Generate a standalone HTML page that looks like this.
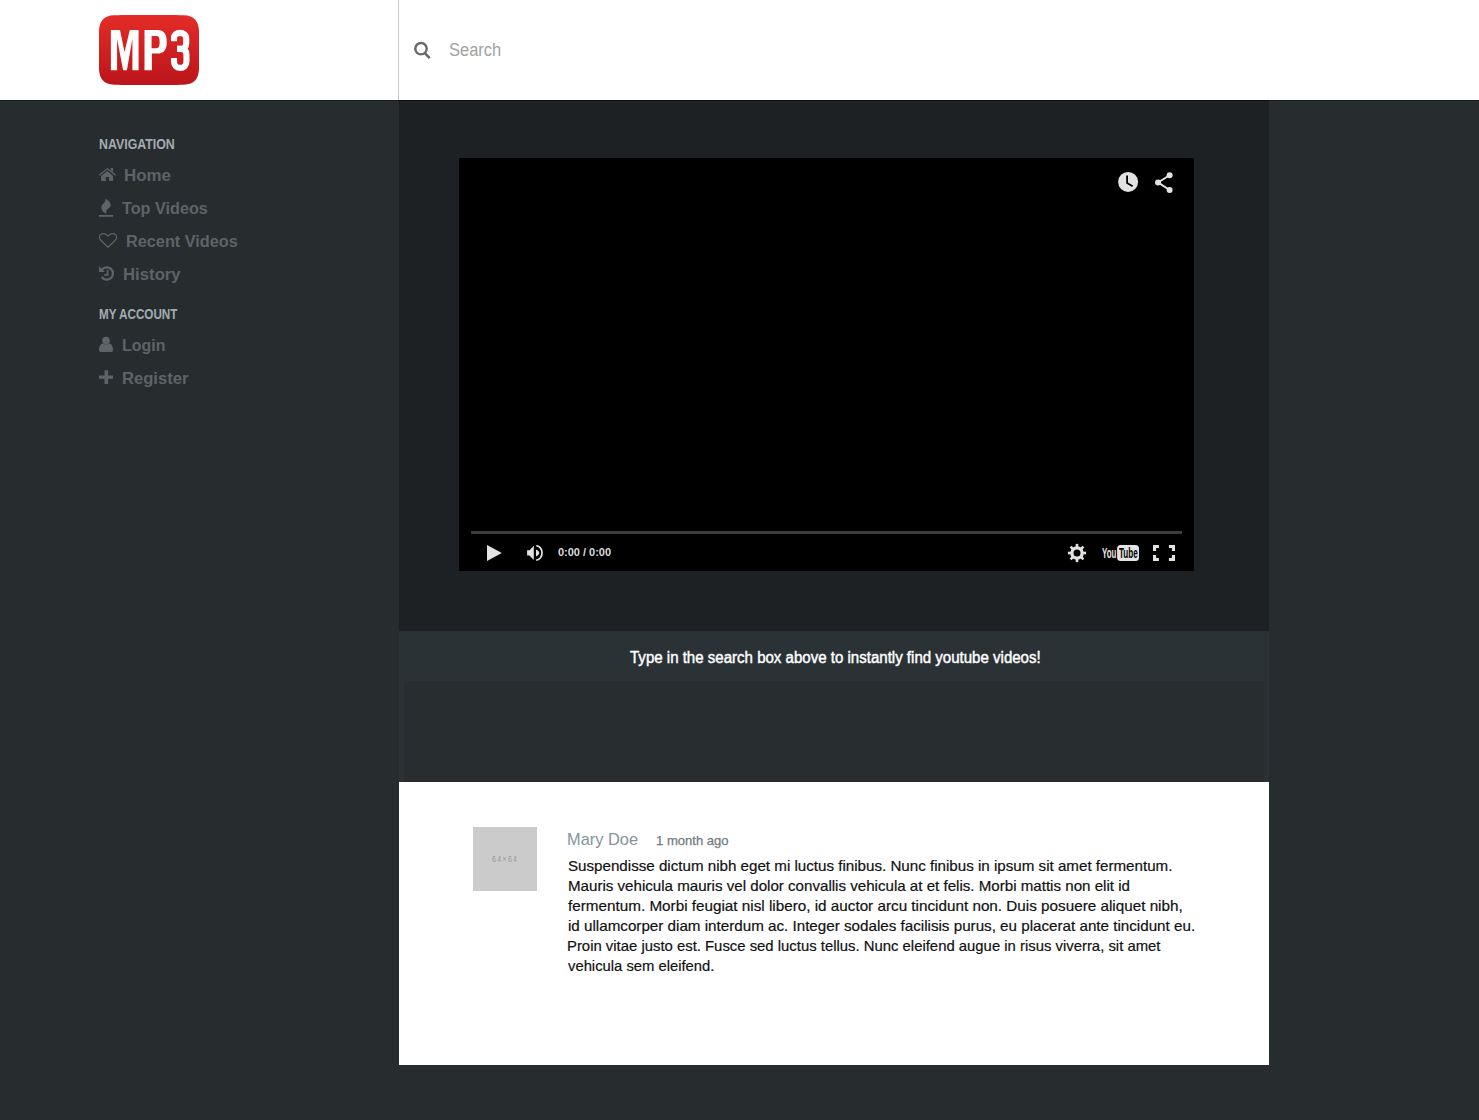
<!DOCTYPE html>
<html><head><meta charset="utf-8">
<style>
*{margin:0;padding:0;box-sizing:border-box}
html,body{width:1479px;height:1120px;overflow:hidden;background:#272c2f;font-family:"Liberation Sans",sans-serif}
</style></head><body>
<div style="position:absolute;left:0;top:0;width:1479px;height:100px;background:#fff"></div>
<div style="position:absolute;left:398px;top:0;width:1px;height:100px;background:#c6cacd"></div>
<div style="position:absolute;left:0;top:100px;width:1479px;height:1px;background:#1b1f22"></div>
<div style="position:absolute;left:399px;top:100px;width:870px;height:1px;background:#0f1214"></div>
<div style="position:absolute;left:0;top:101px;width:398px;height:1019px;background:#272c2f"></div>
<div style="position:absolute;left:399px;top:101px;width:870px;height:530px;background:#1e2124"></div>
<div style="position:absolute;left:459px;top:158px;width:735px;height:413px;background:#000"></div>
<div style="position:absolute;left:399px;top:631px;width:870px;height:151px;background:#2b3236"></div>
<div style="position:absolute;left:404px;top:681px;width:860px;height:101px;background:#282d30"></div>
<div style="position:absolute;left:399px;top:782px;width:870px;height:283px;background:#fff"></div>
<div style="position:absolute;left:473px;top:827px;width:64px;height:64px;background:#cbcbcb"></div>

<svg style="position:absolute;left:99px;top:15px" width="100" height="70" viewBox="99 15 100 70">
 <defs><linearGradient id="lg" x1="0" y1="0" x2="0" y2="1">
  <stop offset="0" stop-color="#e42c27"/><stop offset="1" stop-color="#bb151b"/></linearGradient></defs>
 <path d="M114,15.3 C130,14.8 168,14.8 184,15.3 C194,15.6 198.6,21 199,31 C199.4,43 199.4,57 199,69 C198.6,79 194,84.4 184,84.7 C168,85.2 130,85.2 114,84.7 C104,84.4 99.4,79 99,69 C98.6,57 98.6,43 99,31 C99.4,21 104,15.6 114,15.3 Z" fill="url(#lg)"/>
 <g fill="#fff">
  <path d="M110.9,30.1 L120,30.1 L124.5,52 L129.8,30.1 L138.6,30.1 L138.6,70.2 L132.4,70.2 L132.4,38.8 L126.9,70.2 L123.1,70.2 L117.1,38.8 L117.1,70.2 L110.9,70.2 Z"/>
  <path d="M144.5,30.1 L157.5,30.1 C164,30.1 166.8,34.5 166.8,42 C166.8,49.5 164,53.6 157.5,53.6 L151.9,53.6 L151.9,70.2 L144.5,70.2 Z M151.6,35.9 L151.6,48.2 L156.3,48.2 C158.8,48.2 159.6,46.5 159.6,42 C159.6,37.5 158.8,35.9 156.3,35.9 Z" fill-rule="evenodd"/>
 </g>
 <g fill="none" stroke="#fff" stroke-width="6.1">
  <path d="M174,41.3 L174,38.3 C174,34.6 176.5,32.9 180.05,32.9 C183.6,32.9 186.2,34.6 186.2,38.5 L186.2,43 C186.2,46.8 184.5,48.9 181,48.9 L177,48.9"/>
  <path d="M177,48.9 L181,48.9 C184.8,48.9 186.45,51 186.45,55 L186.45,61.5 C186.45,65.6 183.8,67.9 180.05,67.9 C176.3,67.9 174,65.6 174,61.5 L174,58"/>
 </g>
</svg>

<svg style="position:absolute;left:405px;top:35px" width="35" height="30" viewBox="405 35 35 30">
 <circle cx="421" cy="48.7" r="5.7" fill="none" stroke="#686868" stroke-width="2.4"/>
 <path d="M424.6,52.9 L429.7,58.1" stroke="#686868" stroke-width="2.6"/>
</svg>

<svg style="position:absolute;left:0;top:0" width="398" height="420" viewBox="0 0 398 420">
 <!-- home -->
 <g fill="#5d6468">
  <path d="M99.2,174.3 L107.4,167.9 L115.6,174.3 L115.6,176 L107.4,169.6 L99.2,176 Z"/>
  <path d="M110.6,168 L113.1,168 L113.1,171.9 L110.6,170 Z"/>
  <path d="M101.1,176.1 L107.4,170.9 L113.1,176.1 L113.1,181 L109.1,181 L109.1,177 L105.8,177 L105.8,181 L101.1,181 Z"/>
 </g>
 <!-- fire -->
 <g fill="#5d6468">
  <path d="M105.6,198.8 C108.5,200.3 110.8,202.3 110.7,205 C110.6,207.8 107.2,208.6 106.4,210.8 C106.1,211.8 106.2,212.9 106.4,213.8 C103.5,212.8 101.3,210.6 101.4,207.5 C101.5,204.5 104.3,203.5 104.9,201.6 C105.2,200.7 105.3,199.6 105.6,198.8 Z"/>
  <rect x="99" y="215" width="14" height="1.8"/>
 </g>
 <!-- heart -->
 <path d="M108,247.2 L100.9,240.3 C98.6,238 98.9,234.6 101.9,233.8 C104.3,233.2 106.5,234.2 108,236 C109.5,234.2 111.7,233.2 114.1,233.8 C117.1,234.6 117.4,238 115.1,240.3 Z" fill="none" stroke="#5d6468" stroke-width="1.2" stroke-linejoin="round"/>
 <!-- history -->
 <g fill="none" stroke="#5d6468" stroke-width="2.3">
  <path d="M102.09,269.55 A6.15,6.15 0 1 1 101.76,277.03"/>
  <path d="M107.6,269.9 L107.6,274.8 L104.3,274.8" stroke-width="1.7"/>
 </g>
 <path d="M99,266.2 L99,272.1 L104.9,272.1 Z" fill="#5d6468"/>
 <!-- user -->
 <g fill="#5d6468">
  <circle cx="106" cy="340.6" r="3.8"/>
  <path d="M99,350 C99,345.5 101,343.6 103.5,343.6 C104.5,344.8 107.5,344.8 108.5,343.6 C111,343.6 113,345.5 113,350 C113,351.5 112,352 111,352 L101,352 C100,352 99,351.5 99,350 Z"/>
 </g>
 <!-- plus -->
 <g fill="#5d6468">
  <rect x="104.5" y="370.2" width="3.6" height="13.8"/>
  <rect x="99" y="375.5" width="14" height="3.3"/>
 </g>
</svg>

<svg style="position:absolute;left:0;top:0" width="1479" height="600" viewBox="0 0 1479 600">
 <!-- clock -->
 <circle cx="1128.1" cy="181.9" r="10" fill="#e3e3e3"/>
 <path d="M1127.1,175.6 L1127.1,182.9 L1132.6,186.3" fill="none" stroke="#000" stroke-width="1.8"/>
 <!-- share -->
 <g fill="#e3e3e3">
  <circle cx="1169.6" cy="175.2" r="3"/>
  <circle cx="1158" cy="182.4" r="3"/>
  <circle cx="1169.6" cy="190" r="3"/>
 </g>
 <path d="M1169.6,175.2 L1158,182.4 L1169.6,190" fill="none" stroke="#e3e3e3" stroke-width="1.9"/>
 <!-- progress -->
 <rect x="471" y="531" width="711" height="3" fill="#3c3c3c"/>
 <!-- play -->
 <path d="M487,545 L501.8,553 L487,561 Z" fill="#e3e3e3"/>
 <!-- volume -->
 <path d="M527.1,550.3 L529.5,550.3 L533.8,545.8 L533.8,560.1 L529.5,555.6 L527.1,555.6 Z" fill="#e3e3e3"/>
 <path d="M536,549.6 C538,550.5 539.3,551.8 539.3,553.05 C539.3,554.3 538,555.6 536,556.5 Z" fill="#e3e3e3"/>
 <path d="M536.2,545.75 A5.85,7.2 0 0 1 536.2,560.15" fill="none" stroke="#e3e3e3" stroke-width="1.7"/>
 <!-- gear -->
 <g transform="translate(1077,553)" fill="#e3e3e3">
  <circle r="6.8"/>
  <g>
   <rect x="-1.3" y="-9.1" width="2.6" height="18.2"/>
   <rect x="-1.3" y="-9.1" width="2.6" height="18.2" transform="rotate(45)"/>
   <rect x="-1.3" y="-9.1" width="2.6" height="18.2" transform="rotate(90)"/>
   <rect x="-1.3" y="-9.1" width="2.6" height="18.2" transform="rotate(135)"/>
  </g>
  <circle r="3.5" fill="#000"/>
 </g>
 <!-- youtube -->
 <rect x="1117.1" y="545.1" width="21.9" height="15.9" rx="3.5" fill="#e3e3e3"/>
 <!-- fullscreen -->
 <g fill="#e3e3e3">
  <path d="M1153,544.9 H1158.9 V548.1 H1156.1 V551 H1153 Z"/>
  <path d="M1175,544.9 H1168.9 V548.1 H1171.9 V551 H1175 Z"/>
  <path d="M1153,561 H1158.9 V557.9 H1156.1 V554.9 H1153 Z"/>
  <path d="M1175,561 H1168.9 V557.9 H1171.9 V554.9 H1175 Z"/>
 </g>
</svg>
<div style="position:absolute;left:98.75px;top:137.00px;font-size:14.5px;line-height:14.5px;font-weight:bold;color:#a3acb1;white-space:nowrap;transform:scaleX(0.8529);transform-origin:0 0;letter-spacing:0px;">NAVIGATION</div>
<div style="position:absolute;left:124.43px;top:166.80px;font-size:17.4px;line-height:17.4px;font-weight:bold;color:#5d6468;white-space:nowrap;transform:scaleX(0.9723);transform-origin:0 0;letter-spacing:0px;">Home</div>
<div style="position:absolute;left:122.40px;top:200.00px;font-size:17.4px;line-height:17.4px;font-weight:bold;color:#5d6468;white-space:nowrap;transform:scaleX(0.9315);transform-origin:0 0;letter-spacing:0px;">Top Videos</div>
<div style="position:absolute;left:125.66px;top:233.20px;font-size:17.4px;line-height:17.4px;font-weight:bold;color:#5d6468;white-space:nowrap;transform:scaleX(0.9356);transform-origin:0 0;letter-spacing:0px;">Recent Videos</div>
<div style="position:absolute;left:123.44px;top:265.70px;font-size:17.4px;line-height:17.4px;font-weight:bold;color:#5d6468;white-space:nowrap;transform:scaleX(0.9627);transform-origin:0 0;letter-spacing:0px;">History</div>
<div style="position:absolute;left:98.70px;top:307.00px;font-size:14.5px;line-height:14.5px;font-weight:bold;color:#a3acb1;white-space:nowrap;transform:scaleX(0.8046);transform-origin:0 0;letter-spacing:0px;">MY ACCOUNT</div>
<div style="position:absolute;left:122.08px;top:337.00px;font-size:17.4px;line-height:17.4px;font-weight:bold;color:#5d6468;white-space:nowrap;transform:scaleX(0.9174);transform-origin:0 0;letter-spacing:0px;">Login</div>
<div style="position:absolute;left:122.05px;top:369.60px;font-size:17.4px;line-height:17.4px;font-weight:bold;color:#5d6468;white-space:nowrap;transform:scaleX(0.9544);transform-origin:0 0;letter-spacing:0px;">Register</div>
<div style="position:absolute;left:449.06px;top:42.00px;font-size:17.6px;line-height:17.6px;font-weight:normal;color:#a2a2a2;white-space:nowrap;transform:scaleX(0.9370);transform-origin:0 0;letter-spacing:0px;">Search</div>
<div style="position:absolute;left:629.80px;top:650.00px;font-size:16px;line-height:16px;font-weight:normal;color:#ffffff;white-space:nowrap;transform:scaleX(0.9404);transform-origin:0 0;letter-spacing:0px;-webkit-text-stroke:0.45px #ffffff;">Type in the search box above to instantly find youtube videos!</div>
<div style="position:absolute;left:566.54px;top:830.70px;font-size:17px;line-height:17px;font-weight:normal;color:#86939b;white-space:nowrap;transform:scaleX(0.9639);transform-origin:0 0;letter-spacing:0px;">Mary Doe</div>
<div style="position:absolute;left:655.98px;top:833.70px;font-size:13px;line-height:13px;font-weight:normal;color:#737b80;white-space:nowrap;transform:scaleX(1.0035);transform-origin:0 0;letter-spacing:0px;-webkit-text-stroke:0.25px #737b80;">1 month ago</div>
<div style="position:absolute;left:567.69px;top:857.60px;font-size:15px;line-height:15px;font-weight:normal;color:#111111;white-space:nowrap;transform:scaleX(1.0097);transform-origin:0 0;letter-spacing:0px;-webkit-text-stroke:0.2px #111111;">Suspendisse dictum nibh eget mi luctus finibus. Nunc finibus in ipsum sit amet fermentum.</div>
<div style="position:absolute;left:567.69px;top:877.60px;font-size:15px;line-height:15px;font-weight:normal;color:#111111;white-space:nowrap;transform:scaleX(1.0075);transform-origin:0 0;letter-spacing:0px;-webkit-text-stroke:0.2px #111111;">Mauris vehicula mauris vel dolor convallis vehicula at et felis. Morbi mattis non elit id</div>
<div style="position:absolute;left:567.50px;top:897.60px;font-size:15px;line-height:15px;font-weight:normal;color:#111111;white-space:nowrap;transform:scaleX(1.0169);transform-origin:0 0;letter-spacing:0px;-webkit-text-stroke:0.2px #111111;">fermentum. Morbi feugiat nisl libero, id auctor arcu tincidunt non. Duis posuere aliquet nibh,</div>
<div style="position:absolute;left:567.69px;top:917.60px;font-size:15px;line-height:15px;font-weight:normal;color:#111111;white-space:nowrap;transform:scaleX(1.0123);transform-origin:0 0;letter-spacing:0px;-webkit-text-stroke:0.2px #111111;">id ullamcorper diam interdum ac. Integer sodales facilisis purus, eu placerat ante tincidunt eu.</div>
<div style="position:absolute;left:566.51px;top:937.60px;font-size:15px;line-height:15px;font-weight:normal;color:#111111;white-space:nowrap;transform:scaleX(0.9914);transform-origin:0 0;letter-spacing:0px;-webkit-text-stroke:0.2px #111111;">Proin vitae justo est. Fusce sed luctus tellus. Nunc eleifend augue in risus viverra, sit amet</div>
<div style="position:absolute;left:567.50px;top:957.60px;font-size:15px;line-height:15px;font-weight:normal;color:#111111;white-space:nowrap;transform:scaleX(0.9865);transform-origin:0 0;letter-spacing:0px;-webkit-text-stroke:0.2px #111111;">vehicula sem eleifend.</div>
<div style="position:absolute;left:558.20px;top:546.80px;font-size:11px;line-height:11px;font-weight:bold;color:#dddddd;white-space:nowrap;transform:scaleX(0.9962);transform-origin:0 0;letter-spacing:0px;">0:00 / 0:00</div>
<div style="position:absolute;left:1102.20px;top:546.00px;font-size:14px;line-height:14px;font-weight:bold;color:#e3e3e3;white-space:nowrap;transform:scaleX(0.5640);transform-origin:0 0;letter-spacing:0px;">You</div>
<div style="position:absolute;left:1119.00px;top:546.00px;font-size:14px;line-height:14px;font-weight:bold;color:#000000;white-space:nowrap;transform:scaleX(0.5781);transform-origin:0 0;letter-spacing:0px;">Tube</div>
<div style="position:absolute;left:491.80px;top:854.90px;font-size:8.7px;line-height:8.7px;font-weight:normal;color:#9a9a9a;white-space:nowrap;transform:scaleX(0.8133);transform-origin:0 0;letter-spacing:1.6px;">64&times;64</div>
</body></html>
